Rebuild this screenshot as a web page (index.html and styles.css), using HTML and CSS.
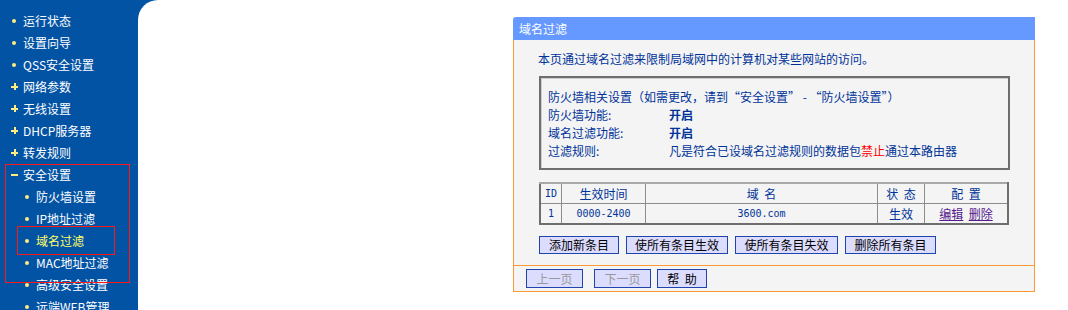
FILE: index.html
```html
<!DOCTYPE html>
<html lang="zh-CN">
<head>
    <meta charset="UTF-8">
    <title>域名过滤</title>
    <link rel="stylesheet" href="styles.css">
</head>
<body>
<div class="page">
    <nav class="menu">
        <ul>
            <li class="leaf">运行状态</li>
            <li class="leaf">设置向导</li>
            <li class="leaf">QSS安全设置</li>
            <li class="fold">网络参数</li>
            <li class="fold">无线设置</li>
            <li class="fold">DHCP服务器</li>
            <li class="fold">转发规则</li>
            <li class="open">安全设置</li>
            <li class="sub">防火墙设置</li>
            <li class="sub">IP地址过滤</li>
            <li class="sub active">域名过滤</li>
            <li class="sub">MAC地址过滤</li>
            <li class="sub">高级安全设置</li>
            <li class="sub">远端WEB管理</li>
        </ul>
        <!-- 标注框 -->
        <div class="mark mark-group"></div>
        <div class="mark mark-item"></div>
    </nav>

    <main class="main">
        <div class="panel">
            <div class="panel-title">域名过滤</div>
            <div class="panel-body">
                <p class="intro">本页通过域名过滤来限制局域网中的计算机对某些网站的访问。</p>

                <div class="fw-box">
                    <div class="fw-head">防火墙相关设置（如需更改，请到“安全设置” - “防火墙设置”）</div>
                    <div class="fw-grid">
                        <span>防火墙功能:</span><b>开启</b>
                        <span>域名过滤功能:</span><b>开启</b>
                        <span>过滤规则:</span><span>凡是符合已设域名过滤规则的数据包<em>禁止</em>通过本路由器</span>
                    </div>
                </div>

                <table class="rules">
                    <thead>
                        <tr>
                            <th class="c-id mono">ID</th>
                            <th class="c-time">生效时间</th>
                            <th class="c-domain">域&nbsp;&nbsp;名</th>
                            <th class="c-state">状&nbsp;&nbsp;态</th>
                            <th class="c-cfg">配&nbsp;&nbsp;置</th>
                        </tr>
                    </thead>
                    <tbody>
                        <tr>
                            <td class="mono">1</td>
                            <td class="mono">0000-2400</td>
                            <td class="mono">3600.com</td>
                            <td>生效</td>
                            <td><a href="#">编辑</a>&nbsp;&nbsp;<a href="#">删除</a></td>
                        </tr>
                    </tbody>
                </table>

                <div class="btn-row">
                    <button class="btn w1">添加新条目</button>
                    <button class="btn w2">使所有条目生效</button>
                    <button class="btn w3">使所有条目失效</button>
                    <button class="btn w4">删除所有条目</button>
                </div>
            </div>
            <div class="panel-foot">
                <button class="btn nav" disabled>上一页</button>
                <button class="btn nav" disabled>下一页</button>
                <button class="btn help">帮&nbsp;&nbsp;助</button>
            </div>
        </div>
    </main>
</div>
</body>
</html>
```

FILE: styles.css
```css
/* 基础 */
body {
    margin: 0;
    font-family: "Noto Sans CJK SC", "DejaVu Sans", sans-serif;
    font-size: 12px;
    background: #fff;
}

.page {
    display: flex;
    height: 310px;
    background: #0353a4;
    overflow: hidden;
}

/* 左侧菜单 */
.menu {
    position: relative;
    width: 138px;
    flex-shrink: 0;
    color: #fff;
}

.menu ul {
    list-style: none;
    margin: 0;
    padding: 10px 0 0 0;
}

.menu li {
    position: relative;
    height: 22px;
    line-height: 22px;
    padding-left: 23px;
    white-space: nowrap;
}

.menu li::before {
    content: '';
    position: absolute;
    top: 9px;
    left: 12px;
    width: 4px;
    height: 4px;
    border-radius: 50%;
    background: #ffec80;
}

.menu li.fold::before {
    top: 7px;
    left: 11px;
    width: 7px;
    height: 7px;
    border-radius: 0;
    background:
        linear-gradient(#ffec80, #ffec80) center / 7px 2px no-repeat,
        linear-gradient(#ffec80, #ffec80) center / 2px 7px no-repeat;
}

.menu li.open::before {
    top: 10px;
    left: 11px;
    width: 7px;
    height: 2px;
    border-radius: 0;
}

.menu li.sub {
    padding-left: 36px;
}

.menu li.sub::before {
    left: 25px;
}

.menu li.active {
    color: #ffff66;
}

.mark {
    position: absolute;
    border: 1px solid #ff1a1a;
}

.mark-group {
    left: 5px;
    top: 164px;
    width: 123px;
    height: 117px;
}

.mark-item {
    left: 17px;
    top: 226px;
    width: 96px;
    height: 27px;
}

/* 右侧内容 */
.main {
    flex: 1;
    background: #fff;
    border-top-left-radius: 20px;
    padding: 17px 0 0 375px;
}

.panel {
    width: 522px;
    color: #003399;
}

.panel-title {
    height: 23px;
    line-height: 23px;
    padding-left: 6px;
    background: #6699ff;
    color: #fff;
    border-top-left-radius: 3px;
}

.panel-body {
    background: #f4f4f4;
    border-left: 1px solid #ff9933;
    border-right: 1px solid #ff9933;
    padding: 10px 0 11px 24px;
}

.intro {
    margin: 0 0 8px 0;
    line-height: 18px;
}

.fw-box {
    width: 453px;
    margin-left: 1px;
    padding: 10px 7px 8px 7px;
    border: 2px solid #6e6e6e;
    box-shadow: inset 1px 1px 0 #cfcfcf;
    line-height: 18px;
}

.fw-grid {
    display: grid;
    grid-template-columns: 121px auto;
}

.fw-grid b {
    font-weight: bold;
}

.fw-grid em {
    font-style: normal;
    color: #ff0000;
}

/* 规则表 */
.rules {
    width: 470px;
    margin: 12px 0 0 1px;
    border-collapse: collapse;
    border: 2px solid #6e6e6e;
    border-top-color: #a8a8a8;
}

.rules th,
.rules td {
    height: 19px;
    padding: 0;
    border: 1px solid #8c8c8c;
    border-top-color: #d0d0d0;
    text-align: center;
    font-weight: normal;
    line-height: 18px;
}

.rules .c-id { width: 20px; }
.rules .c-time { width: 83px; }
.rules .c-domain { width: 231px; }
.rules .c-state { width: 46px; }

.mono {
    font-family: "DejaVu Sans Mono", monospace;
    font-size: 10px;
}

.rules a {
    color: #551a8b;
}

/* 按钮 */
.btn-row {
    display: flex;
    gap: 7px;
    margin: 11px 0 0 1px;
}

.btn {
    height: 18px;
    padding: 0;
    font-family: inherit;
    font-size: 12px;
    line-height: 16px;
    color: #000;
    background: #dcdcff;
    border: 1px solid #1f44ad;
}

.w1 { width: 80px; }
.w2 { width: 102px; }
.w3 { width: 103px; }
.w4 { width: 91px; }

.panel-foot {
    display: flex;
    gap: 11px;
    background: #f4f4f4;
    border: 1px solid #ff9933;
    padding: 3px 12px 3px 12px;
}

.panel-foot .btn {
    height: 19px;
}

.btn.nav {
    width: 57px;
    color: #999;
}

.btn.help {
    width: 50px;
    margin-left: -5px;
}
```
